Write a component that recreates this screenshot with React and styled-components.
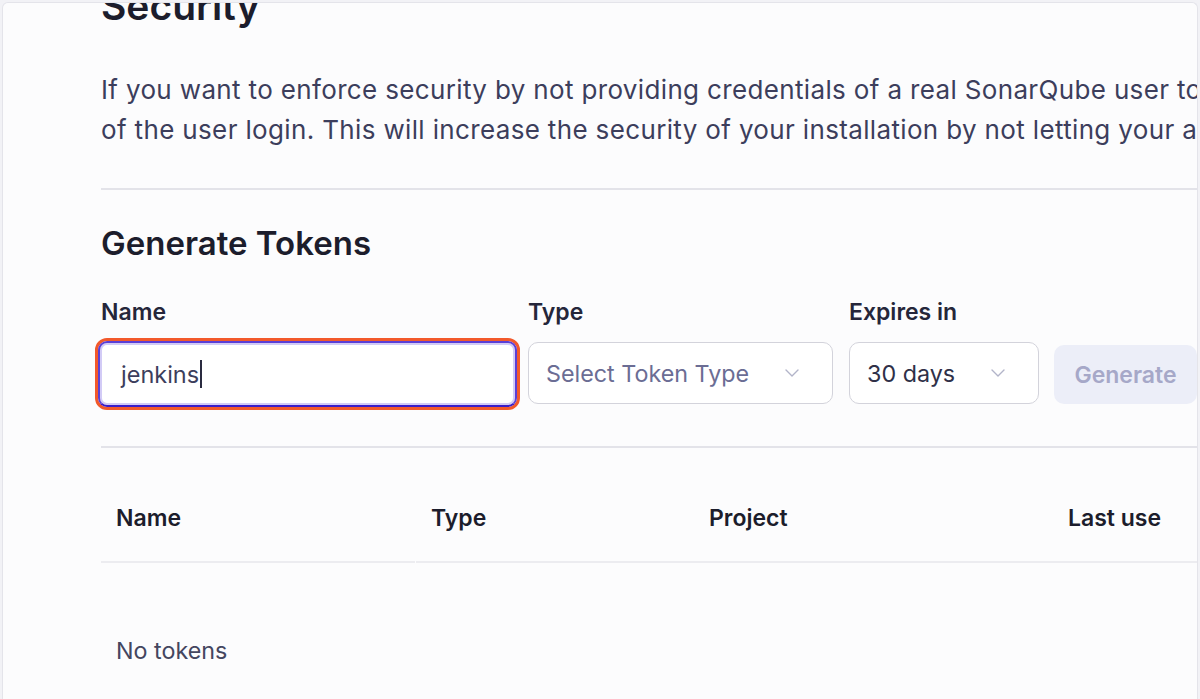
import React from 'react';
import styled, { createGlobalStyle } from 'styled-components';

const Global = createGlobalStyle`
  html, body {
    margin: 0;
    padding: 0;
    background: #f2f2f6;
    font-family: Inter, "Noto Sans", sans-serif;
    overflow: hidden;
  }
`;

const Card = styled.div`
  margin: 2px 2px 0 2px;
  height: 720px;
  background: #fcfcfd;
  border: 1px solid #e4e4ea;
  border-bottom: none;
  border-radius: 6px 6px 0 0;
  overflow: hidden;
  padding-left: 98px;
`;

const Content = styled.div`
  width: 1400px;
  margin-top: -19px;
`;

const PageTitle = styled.h1`
  margin: 0;
  font-size: 39px;
  line-height: 44px;
  font-weight: 600;
  color: #1c1d2c;
`;

const Text = styled.p`
  margin: 42px 0 0;
  font-size: 26px;
  letter-spacing: 0.35px;
  line-height: 40px;
  color: #3c3e5c;
  white-space: nowrap;
`;

const Divider = styled.hr`
  margin: ${(p) => p.$top}px 0 0;
  border: none;
  height: 2px;
  width: 1096px;
  background: #e3e3e9;
`;

const SectionTitle = styled.h2`
  margin: 33px 0 0;
  font-size: 33px;
  line-height: 40px;
  font-weight: 600;
  color: #1c1d2c;
`;

const Form = styled.div`
  display: flex;
  align-items: flex-start;
  margin-top: 35px;
`;

const Field = styled.div`
  display: flex;
  flex-direction: column;
  margin-right: ${(p) => p.$gap}px;
`;

const Label = styled.label`
  font-size: 23px;
  line-height: 28px;
  font-weight: 600;
  color: #25263a;
  margin-bottom: ${(p) => p.$mb}px;
`;

const Highlight = styled.div`
  margin-left: -6px;
  border: 3px solid #f2592b;
  border-radius: 12px;
`;

const TextInput = styled.div`
  box-sizing: border-box;
  width: 419px;
  height: 66px;
  border: 2px solid #5a3fd6;
  border-bottom-color: #3a1ec8;
  box-shadow: inset 0 0 0 2px #d2cbf6;
  border-radius: 9px;
  background: #fff;
  display: flex;
  align-items: center;
  padding-left: 21px;
  font-size: 23.5px;
  color: #3c3e5c;
`;

const Caret = styled.span`
  display: inline-block;
  width: 1.5px;
  height: 28px;
  background: #2a2b40;
  margin-left: 1px;
`;

const Select = styled.div`
  box-sizing: border-box;
  width: ${(p) => p.$w}px;
  height: 62px;
  border: 1.5px solid #d3d3db;
  border-radius: 10px;
  background: #fff;
  display: flex;
  align-items: center;
  justify-content: space-between;
  padding: 0 32px 0 17px;
  font-size: 23.3px;
  color: ${(p) => (p.$placeholder ? '#6b6d94' : '#2f3048')};
`;

const Button = styled.button`
  box-sizing: border-box;
  width: 143px;
  height: 59px;
  margin-top: 47px;
  border: none;
  border-radius: 10px;
  background: #eceef8;
  color: #a6a8c8;
  font-family: inherit;
  font-size: 23px;
  font-weight: 600;
  padding: 0;
  text-align: center;
`;

const Table = styled.div`
  margin-top: 27px;
  width: 1096px;
`;

const HeadRow = styled.div`
  display: grid;
  grid-template-columns: 315px 278px 1fr 220px;
`;

const HeadCell = styled.div`
  height: 86px;
  display: flex;
  align-items: center;
  justify-content: ${(p) => (p.$right ? 'flex-end' : 'flex-start')};
  padding: 0 ${(p) => (p.$right ? '36px' : '15px')};
  margin-right: ${(p) => (p.$first ? '1px' : '0')};
  font-size: 23px;
  font-weight: 600;
  color: #1c1d2c;
  border-bottom: 2px solid #ececf0;
  white-space: nowrap;
`;

const Empty = styled.div`
  padding: 74px 15px 0;
  font-size: 23.3px;
  line-height: 28px;
  color: #44465f;
`;

const Chevron = () => (
  <svg width="16" height="10" viewBox="0 0 16 10" fill="none">
    <path d="M2 2l6 6 6-6" stroke="#b2b4c9" strokeWidth="1.4" strokeLinecap="round" strokeLinejoin="round" />
  </svg>
);

export default function App() {
  return (
    <>
      <Global />
      <Card>
        <Content>
          <PageTitle>Security</PageTitle>
          <Text>
            If you want to enforce security by not providing credentials of a real SonarQube user to run your code scan, you may provide a User Token as a replacement
            <br />
            of the user login. This will increase the security of your installation by not letting your analysis user's password going through your network.
          </Text>
          <Divider $top={38} />
          <SectionTitle>Generate Tokens</SectionTitle>
          <Form>
            <Field $gap={8}>
              <Label $mb={12}>Name</Label>
              <Highlight>
                <TextInput>
                  jenkins
                  <Caret />
                </TextInput>
              </Highlight>
            </Field>
            <Field $gap={16}>
              <Label $mb={16}>Type</Label>
              <Select $w={305} $placeholder>
                <span>Select Token Type</span>
                <Chevron />
              </Select>
            </Field>
            <Field $gap={15}>
              <Label $mb={16}>Expires in</Label>
              <Select $w={190}>
                <span>30 days</span>
                <Chevron />
              </Select>
            </Field>
            <Button>Generate</Button>
          </Form>
          <Divider $top={36} />
          <Table>
            <HeadRow>
              <HeadCell $first>Name</HeadCell>
              <HeadCell>Type</HeadCell>
              <HeadCell>Project</HeadCell>
              <HeadCell $right>Last use</HeadCell>
            </HeadRow>
            <Empty>No tokens</Empty>
          </Table>
        </Content>
      </Card>
    </>
  );
}
